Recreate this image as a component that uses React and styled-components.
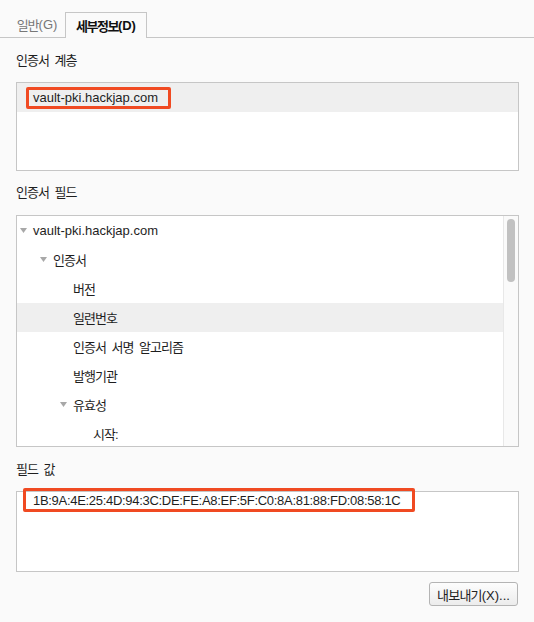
import React from 'react'
import styled, { createGlobalStyle } from 'styled-components'

const GlobalStyle = createGlobalStyle`
  html, body {
    margin: 0;
    padding: 0;
    background: #fafafa;
  }
  body {
    font-family: "Liberation Sans", "Noto Sans CJK KR", sans-serif;
    font-size: 13px;
    color: #1e1e1e;
  }
`

const Page = styled.div`
  width: 534px;
  height: 622px;
  background: #fafafa;
  display: flex;
  flex-direction: column;
`

const TabBar = styled.div`
  display: flex;
  align-items: flex-end;
  height: 37px;
  border-bottom: 1px solid #c6c6c6;
  padding-left: 9px;
`

const Tab = styled.div`
  width: ${p => (p.$active ? '82px' : '56px')};
  height: ${p => (p.$active ? '26px' : '25px')};
  margin-bottom: ${p => (p.$active ? '-1px' : '0')};
  padding-bottom: 1px;
  display: flex;
  align-items: center;
  justify-content: center;
  box-sizing: border-box;
  border: 1px solid ${p => (p.$active ? '#c6c6c6' : 'transparent')};
  border-bottom: none;
  background: #fafafa;
  color: ${p => (p.$active ? '#111' : '#777')};
  font-weight: ${p => (p.$active ? 700 : 400)};
`

const Ko = styled.span`
  letter-spacing: ${p => p.$ls ?? -1}px;
  word-spacing: 3px;
`

const Body = styled.div`
  flex: 1;
  display: flex;
  flex-direction: column;
  padding: 0 15px 0 16px;
`

const Label = styled.div`
  height: 16px;
  line-height: 16px;
  margin-top: ${p => p.$top}px;
  margin-bottom: ${p => p.$bottom}px;
`

const Box = styled.div`
  height: ${p => p.$height}px;
  box-sizing: border-box;
  border: 1px solid #c6c6c6;
  background: #fff;
  overflow: ${p => (p.$clip ? 'hidden' : 'visible')};
`

const Row = styled.div`
  height: 29px;
  display: flex;
  align-items: center;
  padding-left: ${p => p.$indent}px;
  background: ${p => (p.$selected ? '#efefef' : 'transparent')};
`

const ValueRow = styled.div`
  display: flex;
  padding-left: 6px;
  margin-top: -4px;
`

const Highlight = styled.span`
  display: inline-flex;
  align-items: center;
  height: ${p => p.$h}px;
  box-sizing: border-box;
  padding: 0 ${p => p.$right}px 0 ${p => p.$left}px;
  border: 3px solid #f04a22;
  border-radius: 2px;
  letter-spacing: ${p => p.$ls || 0}px;
`

const TreeArea = styled.div`
  display: flex;
  height: 100%;
`

const TreeList = styled.div`
  flex: 1;
`

const ScrollTrack = styled.div`
  width: 14px;
  border-left: 1px solid #e8e8e8;
  background: #fafafa;
  display: flex;
  justify-content: center;
  padding-top: 3px;
`

const Thumb = styled.div`
  width: 8px;
  height: 63px;
  border-radius: 4px;
  background: #c1c1c1;
`

const Toggle = styled.span`
  width: 13px;
  display: inline-flex;
  align-items: center;
`

const Footer = styled.div`
  display: flex;
  justify-content: flex-end;
  margin-top: 10px;
  padding-right: 1px;
`

const Button = styled.button`
  width: 89px;
  height: 24px;
  font-family: inherit;
  font-size: 13px;
  color: #222;
  border: 1px solid #b4b4b4;
  border-radius: 3px;
  background: linear-gradient(#fdfdfd, #ececec);
  padding: 0;
`

const fields = [
  { text: 'vault-pki.hackjap.com', indent: 3, open: true },
  { text: '인증서', indent: 23, open: true, ko: true },
  { text: '버전', indent: 56, ko: true },
  { text: '일련번호', indent: 56, selected: true, ko: true },
  { text: '인증서 서명 알고리즘', indent: 56, ko: true },
  { text: '발행기관', indent: 56, ko: true },
  { text: '유효성', indent: 43, open: true, ko: true },
  { text: '시작:', indent: 76, ko: true },
]

function Triangle() {
  return (
    <Toggle>
      <svg width="7" height="5" viewBox="0 0 7 5">
        <path d="M0 0 L7 0 L3.5 5 Z" fill="#a8a8a8" />
      </svg>
    </Toggle>
  )
}

export default function App() {
  return (
    <>
      <GlobalStyle />
      <Page>
        <TabBar>
          <Tab><Ko>일반</Ko>(G)</Tab>
          <Tab $active><Ko $ls={-1.5}>세부정보</Ko>(D)</Tab>
        </TabBar>
        <Body>
          <Label $top={15} $bottom={13}><Ko>인증서 계층</Ko></Label>
          <Box $height={89} $clip>
            <Row $indent={9} $selected>
              <Highlight $h={22} $left={4} $right={10}>vault-pki.hackjap.com</Highlight>
            </Row>
          </Box>

          <Label $top={14} $bottom={14}><Ko>인증서 필드</Ko></Label>
          <Box $height={232} $clip>
            <TreeArea>
              <TreeList>
                {fields.map((f, i) => (
                  <Row key={i} $indent={f.indent} $selected={f.selected}>
                    {f.open && <Triangle />}
                    {f.ko ? <Ko>{f.text}</Ko> : f.text}
                  </Row>
                ))}
              </TreeList>
              <ScrollTrack>
                <Thumb />
              </ScrollTrack>
            </TreeArea>
          </Box>

          <Label $top={15} $bottom={13}><Ko>필드 값</Ko></Label>
          <Box $height={81}>
            <ValueRow>
              <Highlight $h={24} $left={7} $right={12} $ls={-0.3}>
                1B:9A:4E:25:4D:94:3C:DE:FE:A8:EF:5F:C0:8A:81:88:FD:08:58:1C
              </Highlight>
            </ValueRow>
          </Box>

          <Footer>
            <Button><Ko $ls={-0.8}>내보내기</Ko>(X)...</Button>
          </Footer>
        </Body>
      </Page>
    </>
  )
}
